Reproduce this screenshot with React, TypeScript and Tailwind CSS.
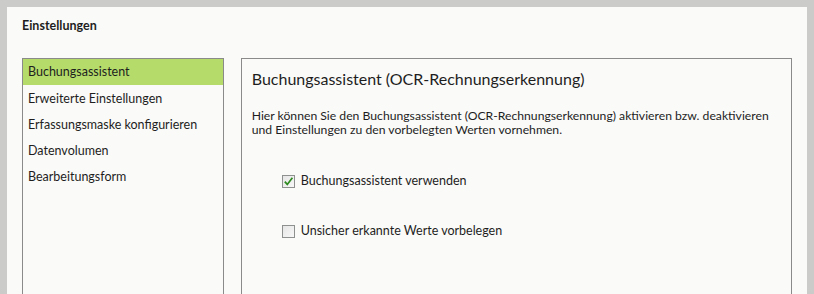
import React from "react";

const font = { fontFamily: 'Lato, "Open Sans", "Noto Sans", sans-serif' };

const menu = [
  "Buchungsassistent",
  "Erweiterte Einstellungen",
  "Erfassungsmaske konfigurieren",
  "Datenvolumen",
  "Bearbeitungsform",
];

function Check({ checked }: { checked?: boolean }) {
  return (
    <span className="flex h-[13px] w-[13px] items-center justify-center border border-[#8e8f8f] bg-gradient-to-br from-[#e6e6e6] to-[#f7f7f7]">
      {checked && (
        <svg width="11" height="11" viewBox="0 0 11 11">
          <path d="M1.8 5.6 L4.3 8.4 L9.4 1.8" fill="none" stroke="#2d8a1f" strokeWidth="1.7" />
        </svg>
      )}
    </span>
  );
}

export default function App() {
  return (
    <div className="h-[294px] w-[814px] overflow-hidden bg-[#cbcbca] pl-[7px] pt-[7px] text-[#1e1e1e]" style={font}>
      <div className="h-full w-[800px] bg-[#fafaf8] px-[15px]">
        <h1 className="pt-[10px] text-[12.5px] font-bold leading-[18px]">Einstellungen</h1>

        <div className="mt-[23px] flex gap-[17px]">
          {/* linke Liste */}
          <div className="h-[300px] w-[202px] border border-[#8a8a8a] text-[12.5px]">
            {menu.map((item, i) => (
              <div
                key={item}
                className={
                  i === 0
                    ? "h-[26px] bg-[#b5dc6a] pl-[5px] leading-[26px]"
                    : "h-[26px] pl-[5px] leading-[27px]"
                }
              >
                {item}
              </div>
            ))}
          </div>

          {/* rechter Bereich */}
          <div className="h-[300px] w-[552px] border border-[#8a8a8a] px-[10px]">
            <h2 className="pt-[9px] text-[16px] leading-[22px]">
              Buchungsassistent (OCR-Rechnungserkennung)
            </h2>
            <p className="mt-[19px] whitespace-nowrap text-[12.2px] leading-[14px]">
              Hier können Sie den Buchungsassistent (OCR-Rechnungserkennung) aktivieren bzw. deaktivieren
              <br />
              und Einstellungen zu den vorbelegten Werten vornehmen.
            </p>
            <div className="ml-[30px] mt-[37px] flex flex-col gap-[36px] text-[12.5px]">
              <label className="flex items-center gap-[6px] leading-[14px]">
                <Check checked />
                Buchungsassistent verwenden
              </label>
              <label className="flex items-center gap-[6px] leading-[14px]">
                <Check />
                Unsicher erkannte Werte vorbelegen
              </label>
            </div>
          </div>
        </div>
      </div>
    </div>
  );
}
